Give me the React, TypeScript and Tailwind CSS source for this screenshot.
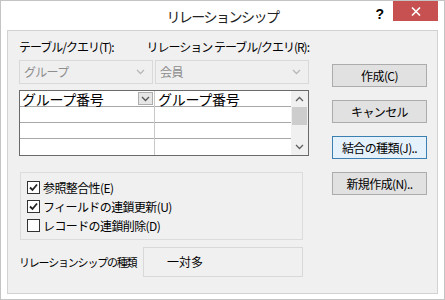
import React from "react";

const Chevron = ({ className = "", color = "#444" }: { className?: string; color?: string }) => (
  <svg width="9" height="6" viewBox="0 0 9 6" className={className}>
    <path d="M1 1 L4.5 4.5 L8 1" fill="none" stroke={color} strokeWidth="1.3" />
  </svg>
);

const ChevronUp = ({ color = "#555" }: { color?: string }) => (
  <svg width="9" height="6" viewBox="0 0 9 6">
    <path d="M1 5 L4.5 1.5 L8 5" fill="none" stroke={color} strokeWidth="1.3" />
  </svg>
);

const Check = () => (
  <svg width="9" height="9" viewBox="0 0 9 9">
    <path d="M1 4.5 L3.5 7 L8 1.5" fill="none" stroke="#222" strokeWidth="1.8" />
  </svg>
);

const Btn = ({ label, focus = false }: { label: string; focus?: boolean }) => (
  <div
    className={`h-[23px] w-[95px] flex items-center justify-center whitespace-nowrap text-[12px] tracking-[-0.6px] text-black border ${
      focus ? "border-[#3c7fb1] bg-[#e5f1fb]" : "border-[#acacac] bg-[#e1e1e1]"
    }`}
  >
    {label}
  </div>
);

const CheckRow = ({ checked, label }: { checked: boolean; label: string }) => (
  <div className="flex items-center h-[19px]">
    <div className="w-[13px] h-[13px] border border-[#333] bg-white flex items-center justify-center">
      {checked && <Check />}
    </div>
    <span className="ml-[3px] whitespace-nowrap text-[12px] tracking-[-0.6px] text-black">{label}</span>
  </div>
);

export default function App() {
  return (
    <div className="w-[445px] h-[300px] bg-white border border-[#c4c4c4] flex flex-col font-['Noto_Sans_CJK_JP','Noto_Sans',sans-serif] select-none">
      {/* title bar */}
      <div className="h-[29px] grid grid-cols-[1fr_auto_1fr] shrink-0">
        <div />
        <div className="flex items-center whitespace-nowrap text-[14px] tracking-[-1.5px] text-[#222] pt-[2px]">リレーションシップ</div>
        <div className="flex justify-end items-start">
          <span className="mt-[3px] mr-[9px] text-[14px] font-bold text-black font-['Liberation_Sans',sans-serif]">?</span>
          <div className="w-[45px] h-[20px] bg-[#c75050] flex items-center justify-center mr-[6px]">
            <svg width="10" height="9" viewBox="0 0 10 9">
              <path d="M1 0.5 L9 8.5 M9 0.5 L1 8.5" stroke="#fff" strokeWidth="1.6" />
            </svg>
          </div>
        </div>
      </div>
      {/* client */}
      <div className="mx-[6px] h-[264px] border border-[#d2d2d2] bg-[#f0f0f0] flex">
        {/* left column */}
        <div className="ml-[11px] w-[290px] flex flex-col">
          <div className="mt-[8px] h-[16px] flex items-center whitespace-nowrap text-[12px] tracking-[-1px] text-black">
            <span className="w-[136px]">テーブル/クエリ(T):</span>
            <span>リレーション テーブル/クエリ(R):</span>
          </div>
          <div className="mt-[5px] flex gap-[2px]">
            <div className="w-[134px] h-[24px] border border-[#d9d9d9] bg-[#efefef] flex items-center justify-between pl-[4px] pr-[7px]">
              <span className="text-[12px] tracking-[-0.7px] text-[#8d8d8d]">グループ</span>
              <Chevron color="#b8b8b8" />
            </div>
            <div className="flex-1 h-[24px] border border-[#d9d9d9] bg-[#efefef] flex items-center justify-between pl-[4px] pr-[7px]">
              <span className="text-[12px] tracking-[-0.5px] text-[#8d8d8d]">会員</span>
              <Chevron color="#b8b8b8" />
            </div>
          </div>
          {/* grid */}
          <div className="mt-[6px] h-[66px] border border-[#6a6a6a] bg-white flex">
            <div className="w-[135px] border-r border-[#c8c8c8] flex flex-col">
              <div className="h-[16px] border-b border-[#a8a8a8] flex items-center justify-between pl-[2px] pr-[1px]">
                <span className="whitespace-nowrap text-[14px] leading-[14px] tracking-[-0.3px] text-black">グループ番号</span>
                <div className="w-[15px] h-[13px] border border-[#adadad] bg-[#e6e6e6] flex items-center justify-center">
                  <Chevron color="#555" />
                </div>
              </div>
              <div className="h-[16px] border-b border-[#a8a8a8]" />
              <div className="h-[16px] border-b border-[#a8a8a8]" />
              <div className="flex-1" />
            </div>
            <div className="flex-1 flex flex-col">
              <div className="h-[16px] border-b border-[#a8a8a8] flex items-center pl-[3px]">
                <span className="whitespace-nowrap text-[14px] leading-[14px] tracking-[-0.3px] text-black">グループ番号</span>
              </div>
              <div className="h-[16px] border-b border-[#a8a8a8]" />
              <div className="h-[16px] border-b border-[#a8a8a8]" />
              <div className="flex-1" />
            </div>
            <div className="w-[17px] bg-[#f0f0f0] flex flex-col items-center">
              <div className="h-[16px] flex items-center justify-center">
                <ChevronUp color="#606060" />
              </div>
              <div className="w-[15px] h-[18px] bg-[#cdcdcd]" />
              <div className="flex-1" />
              <div className="h-[16px] flex items-center justify-center">
                <Chevron color="#606060" />
              </div>
            </div>
          </div>
          {/* group box */}
          <div className="mt-[16px] ml-[1px] w-[283px] h-[68px] border border-[#dcdcdc] flex flex-col pl-[6px] pt-[5px]">
            <CheckRow checked label="参照整合性(E)" />
            <CheckRow checked label="フィールドの連鎖更新(U)" />
            <CheckRow checked={false} label="レコードの連鎖削除(D)" />
          </div>
          {/* bottom row */}
          <div className="mt-[7px] flex items-center">
            <span className="w-[124px] whitespace-nowrap text-[11px] tracking-[-1.2px] text-black">リレーションシップの種類</span>
            <div className="w-[160px] h-[30px] border border-[#d8d8d8] flex items-center pl-[23px] text-[12px] text-black">
              一対多
            </div>
          </div>
        </div>
        {/* right column */}
        <div className="ml-[23px] mt-[33px] flex flex-col gap-[13px]">
          <Btn label="作成(C)" />
          <Btn label="キャンセル" />
          <Btn label="結合の種類(J).." focus />
          <Btn label="新規作成(N).." />
        </div>
      </div>
    </div>
  );
}
